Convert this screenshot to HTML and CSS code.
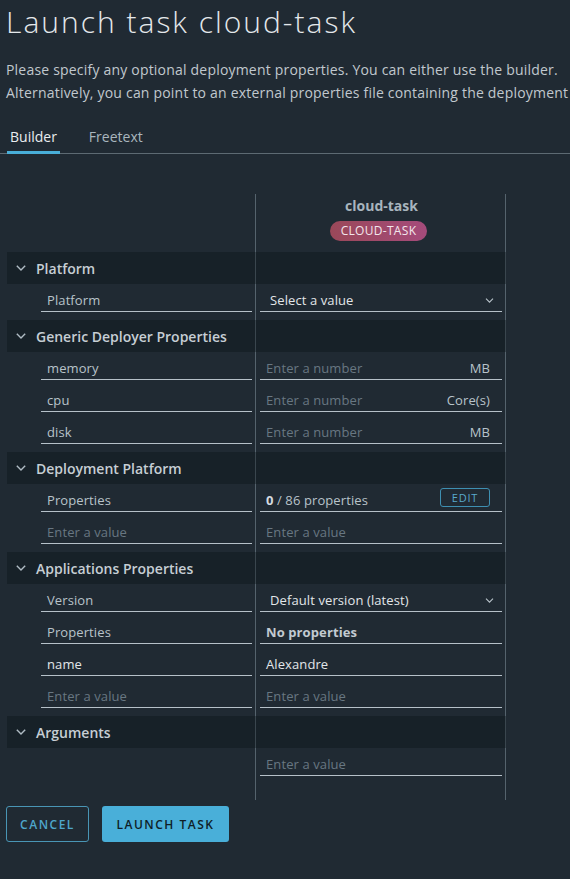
FILE: index.html
```html
<!DOCTYPE html>
<html lang="en">
<head>
<meta charset="utf-8">
<title>Launch task cloud-task</title>
<link rel="stylesheet" href="styles.css">
</head>
<body>
<div class="page">
  <h1 class="title">Launch task cloud-task</h1>
  <p class="desc">
    <span class="desc-line">Please specify any optional deployment properties. You can either use the builder.</span>
    <span class="desc-line">Alternatively, you can point to an external properties file containing the deployment</span>
  </p>
  <div class="tabs">
    <button class="tab active">Builder</button>
    <button class="tab">Freetext</button>
  </div>

  <div class="builder">
    <div class="head">
      <div class="c1"></div>
      <div class="c2 app-head">
        <div class="app-name">cloud-task</div>
        <span class="badge">CLOUD-TASK</span>
      </div>
    </div>

    <div class="section">
      <div class="sec-head"><svg class="chev" viewBox="0 0 10 6" width="10" height="6"><path d="M0.8 0.8 L5 5 L9.2 0.8"/></svg><span>Platform</span></div>
      <div class="row">
        <div class="c1"><div class="field label">Platform</div></div>
        <div class="c2"><div class="field select value">Select a value<svg class="sel-chev" viewBox="0 0 10 6" width="9" height="5"><path d="M0.8 0.8 L5 5 L9.2 0.8"/></svg></div></div>
      </div>
    </div>

    <div class="section">
      <div class="sec-head"><svg class="chev" viewBox="0 0 10 6" width="10" height="6"><path d="M0.8 0.8 L5 5 L9.2 0.8"/></svg><span>Generic Deployer Properties</span></div>
      <div class="row">
        <div class="c1"><div class="field label">memory</div></div>
        <div class="c2"><div class="field num"><span class="ph">Enter a number</span><span class="unit">MB</span></div></div>
      </div>
      <div class="row">
        <div class="c1"><div class="field label">cpu</div></div>
        <div class="c2"><div class="field num"><span class="ph">Enter a number</span><span class="unit">Core(s)</span></div></div>
      </div>
      <div class="row">
        <div class="c1"><div class="field label">disk</div></div>
        <div class="c2"><div class="field num"><span class="ph">Enter a number</span><span class="unit">MB</span></div></div>
      </div>
    </div>

    <div class="section">
      <div class="sec-head"><svg class="chev" viewBox="0 0 10 6" width="10" height="6"><path d="M0.8 0.8 L5 5 L9.2 0.8"/></svg><span>Deployment Platform</span></div>
      <div class="row">
        <div class="c1"><div class="field label">Properties</div></div>
        <div class="c2"><div class="field props"><span class="count"><b>0</b> / 86 properties</span><button class="edit">EDIT</button></div></div>
      </div>
      <div class="row">
        <div class="c1"><div class="field ph">Enter a value</div></div>
        <div class="c2"><div class="field ph">Enter a value</div></div>
      </div>
    </div>

    <div class="section">
      <div class="sec-head"><svg class="chev" viewBox="0 0 10 6" width="10" height="6"><path d="M0.8 0.8 L5 5 L9.2 0.8"/></svg><span>Applications Properties</span></div>
      <div class="row">
        <div class="c1"><div class="field label">Version</div></div>
        <div class="c2"><div class="field select value">Default version (latest)<svg class="sel-chev" viewBox="0 0 10 6" width="9" height="5"><path d="M0.8 0.8 L5 5 L9.2 0.8"/></svg></div></div>
      </div>
      <div class="row">
        <div class="c1"><div class="field label">Properties</div></div>
        <div class="c2"><div class="field strong">No properties</div></div>
      </div>
      <div class="row">
        <div class="c1"><div class="field value">name</div></div>
        <div class="c2"><div class="field value">Alexandre</div></div>
      </div>
      <div class="row">
        <div class="c1"><div class="field ph">Enter a value</div></div>
        <div class="c2"><div class="field ph">Enter a value</div></div>
      </div>
    </div>

    <div class="section">
      <div class="sec-head"><svg class="chev" viewBox="0 0 10 6" width="10" height="6"><path d="M0.8 0.8 L5 5 L9.2 0.8"/></svg><span>Arguments</span></div>
      <div class="row">
        <div class="c1"></div>
        <div class="c2"><div class="field ph">Enter a value</div></div>
      </div>
    </div>
  </div>

  <div class="actions">
    <button class="btn btn-outline">CANCEL</button>
    <button class="btn btn-primary">LAUNCH TASK</button>
  </div>
</div>
</body>
</html>
```

FILE: styles.css
```css
html, body {
  margin: 0;
  padding: 0;
  background: #202a33;
  overflow: hidden;
}
body {
  font-family: "Open Sans", "Noto Sans", "DejaVu Sans", sans-serif;
  color: #c5ccd3;
  width: 570px;
  height: 879px;
}
.page {
  padding: 0 0 0 6px;
}
.title {
  margin: 0;
  padding-top: 2px;
  font-size: 30px;
  line-height: 40px;
  font-weight: 300;
  letter-spacing: 2px;
  color: #e4e8eb;
  white-space: nowrap;
}
.desc {
  margin: 16px 0 0 0;
  font-size: 14px;
  line-height: 23px;
  letter-spacing: 0.2px;
  color: #c0c8ce;
}
.desc-line {
  display: block;
  white-space: nowrap;
}
.tabs {
  margin: 19px 0 0 -6px;
  padding-left: 7px;
  display: flex;
  gap: 26px;
  border-bottom: 1px solid #5d6a73;
  height: 30px;
  box-sizing: content-box;
}
.tab {
  background: none;
  border: none;
  margin: 0 0 -1px 0;
  padding: 0 3px;
  font: inherit;
  font-size: 14px;
  color: #a9b6be;
  height: 31px;
  line-height: 28px;
  border-bottom: 3px solid transparent;
  box-sizing: border-box;
}
.tab.active {
  color: #eaedf0;
  border-bottom-color: #49afd9;
}

.builder {
  margin-top: 40px;
  margin-left: 1px;
  width: 499px;
  padding-bottom: 20px;
  background-image:
    linear-gradient(#55636d, #55636d),
    linear-gradient(#55636d, #55636d);
  background-size: 1px 100%, 1px 100%;
  background-position: 248px 0, 498px 0;
  background-repeat: no-repeat;
}
.head, .row {
  display: grid;
  grid-template-columns: 248px 251px;
}
.head {
  height: 58px;
}
.app-head {
  display: flex;
  flex-direction: column;
  align-items: center;
  padding-top: 1px;
}
.app-name {
  font-size: 14px;
  font-weight: 700;
  color: #a8b5be;
  line-height: 22px;
  padding-left: 2px;
}
.badge {
  margin-top: 4px;
  margin-right: 4px;
  height: 20px;
  line-height: 20px;
  padding: 0 11px;
  border-radius: 10px;
  background: linear-gradient(90deg, #9a4859, #a54b7b);
  color: #f3e6ec;
  font-size: 12px;
  letter-spacing: 0.3px;
}
.section + .section {
  margin-top: 4px;
}
.sec-head {
  height: 32px;
  display: flex;
  align-items: center;
  background: rgba(10, 16, 21, 0.35);
  font-size: 14px;
  font-weight: 600;
  color: #c6ced4;
}
.chev {
  margin: 0 10px 0 9px;
  fill: none;
  stroke: #b0bcc4;
  stroke-width: 1.4;
}
.row {
  height: 32px;
}
.row .c1 {
  padding: 0 3px 0 34px;
}
.row .c2 {
  padding: 0 4px 0 5px;
}
.field {
  height: 28px;
  box-sizing: border-box;
  border-bottom: 1px solid #b6c1c9;
  padding: 5px 6px 0 6px;
  line-height: 22px;
  font-size: 13px;
  letter-spacing: 0.1px;
  white-space: nowrap;
  overflow: hidden;
}
.label {
  color: #b8c3ca;
}
.value {
  color: #e2e6e9;
}
.ph, .field .ph {
  color: #687782;
}
.strong {
  color: #c3cbd1;
  font-weight: 700;
}
.num {
  display: flex;
  justify-content: space-between;
  padding-right: 12px;
}
.unit {
  color: #b8c3ca;
}
.select {
  display: flex;
  justify-content: space-between;
  align-items: center;
  padding-left: 10px;
  padding-right: 8px;
}
.sel-chev {
  fill: none;
  stroke: #b8c3ca;
  stroke-width: 1.3;
  margin-top: 1px;
}
.props {
  display: flex;
  justify-content: space-between;
  align-items: flex-start;
  padding-right: 12px;
}
.count {
  color: #b8c3ca;
}
.count b {
  color: #d5dbe0;
}
.edit {
  margin-top: -1px;
  width: 50px;
  height: 19px;
  padding: 0;
  border: 1px solid #3e8fb1;
  border-radius: 3px;
  background: transparent;
  color: #58a9cb;
  font-family: inherit;
  font-size: 11px;
  letter-spacing: 0.8px;
  line-height: 17px;
}
.actions {
  margin-top: 6px;
  display: flex;
  gap: 13px;
}
.btn {
  height: 36px;
  border-radius: 3px;
  font-family: inherit;
  font-size: 12px;
  font-weight: 600;
  letter-spacing: 1.5px;
  padding: 0 10px;
}
.btn-outline {
  width: 83px;
  background: transparent;
  border: 1px solid #4995b5;
  color: #4ea6cb;
}
.btn-primary {
  width: 127px;
  background: #49afd9;
  border: none;
  color: #0f1e27;
}
```
